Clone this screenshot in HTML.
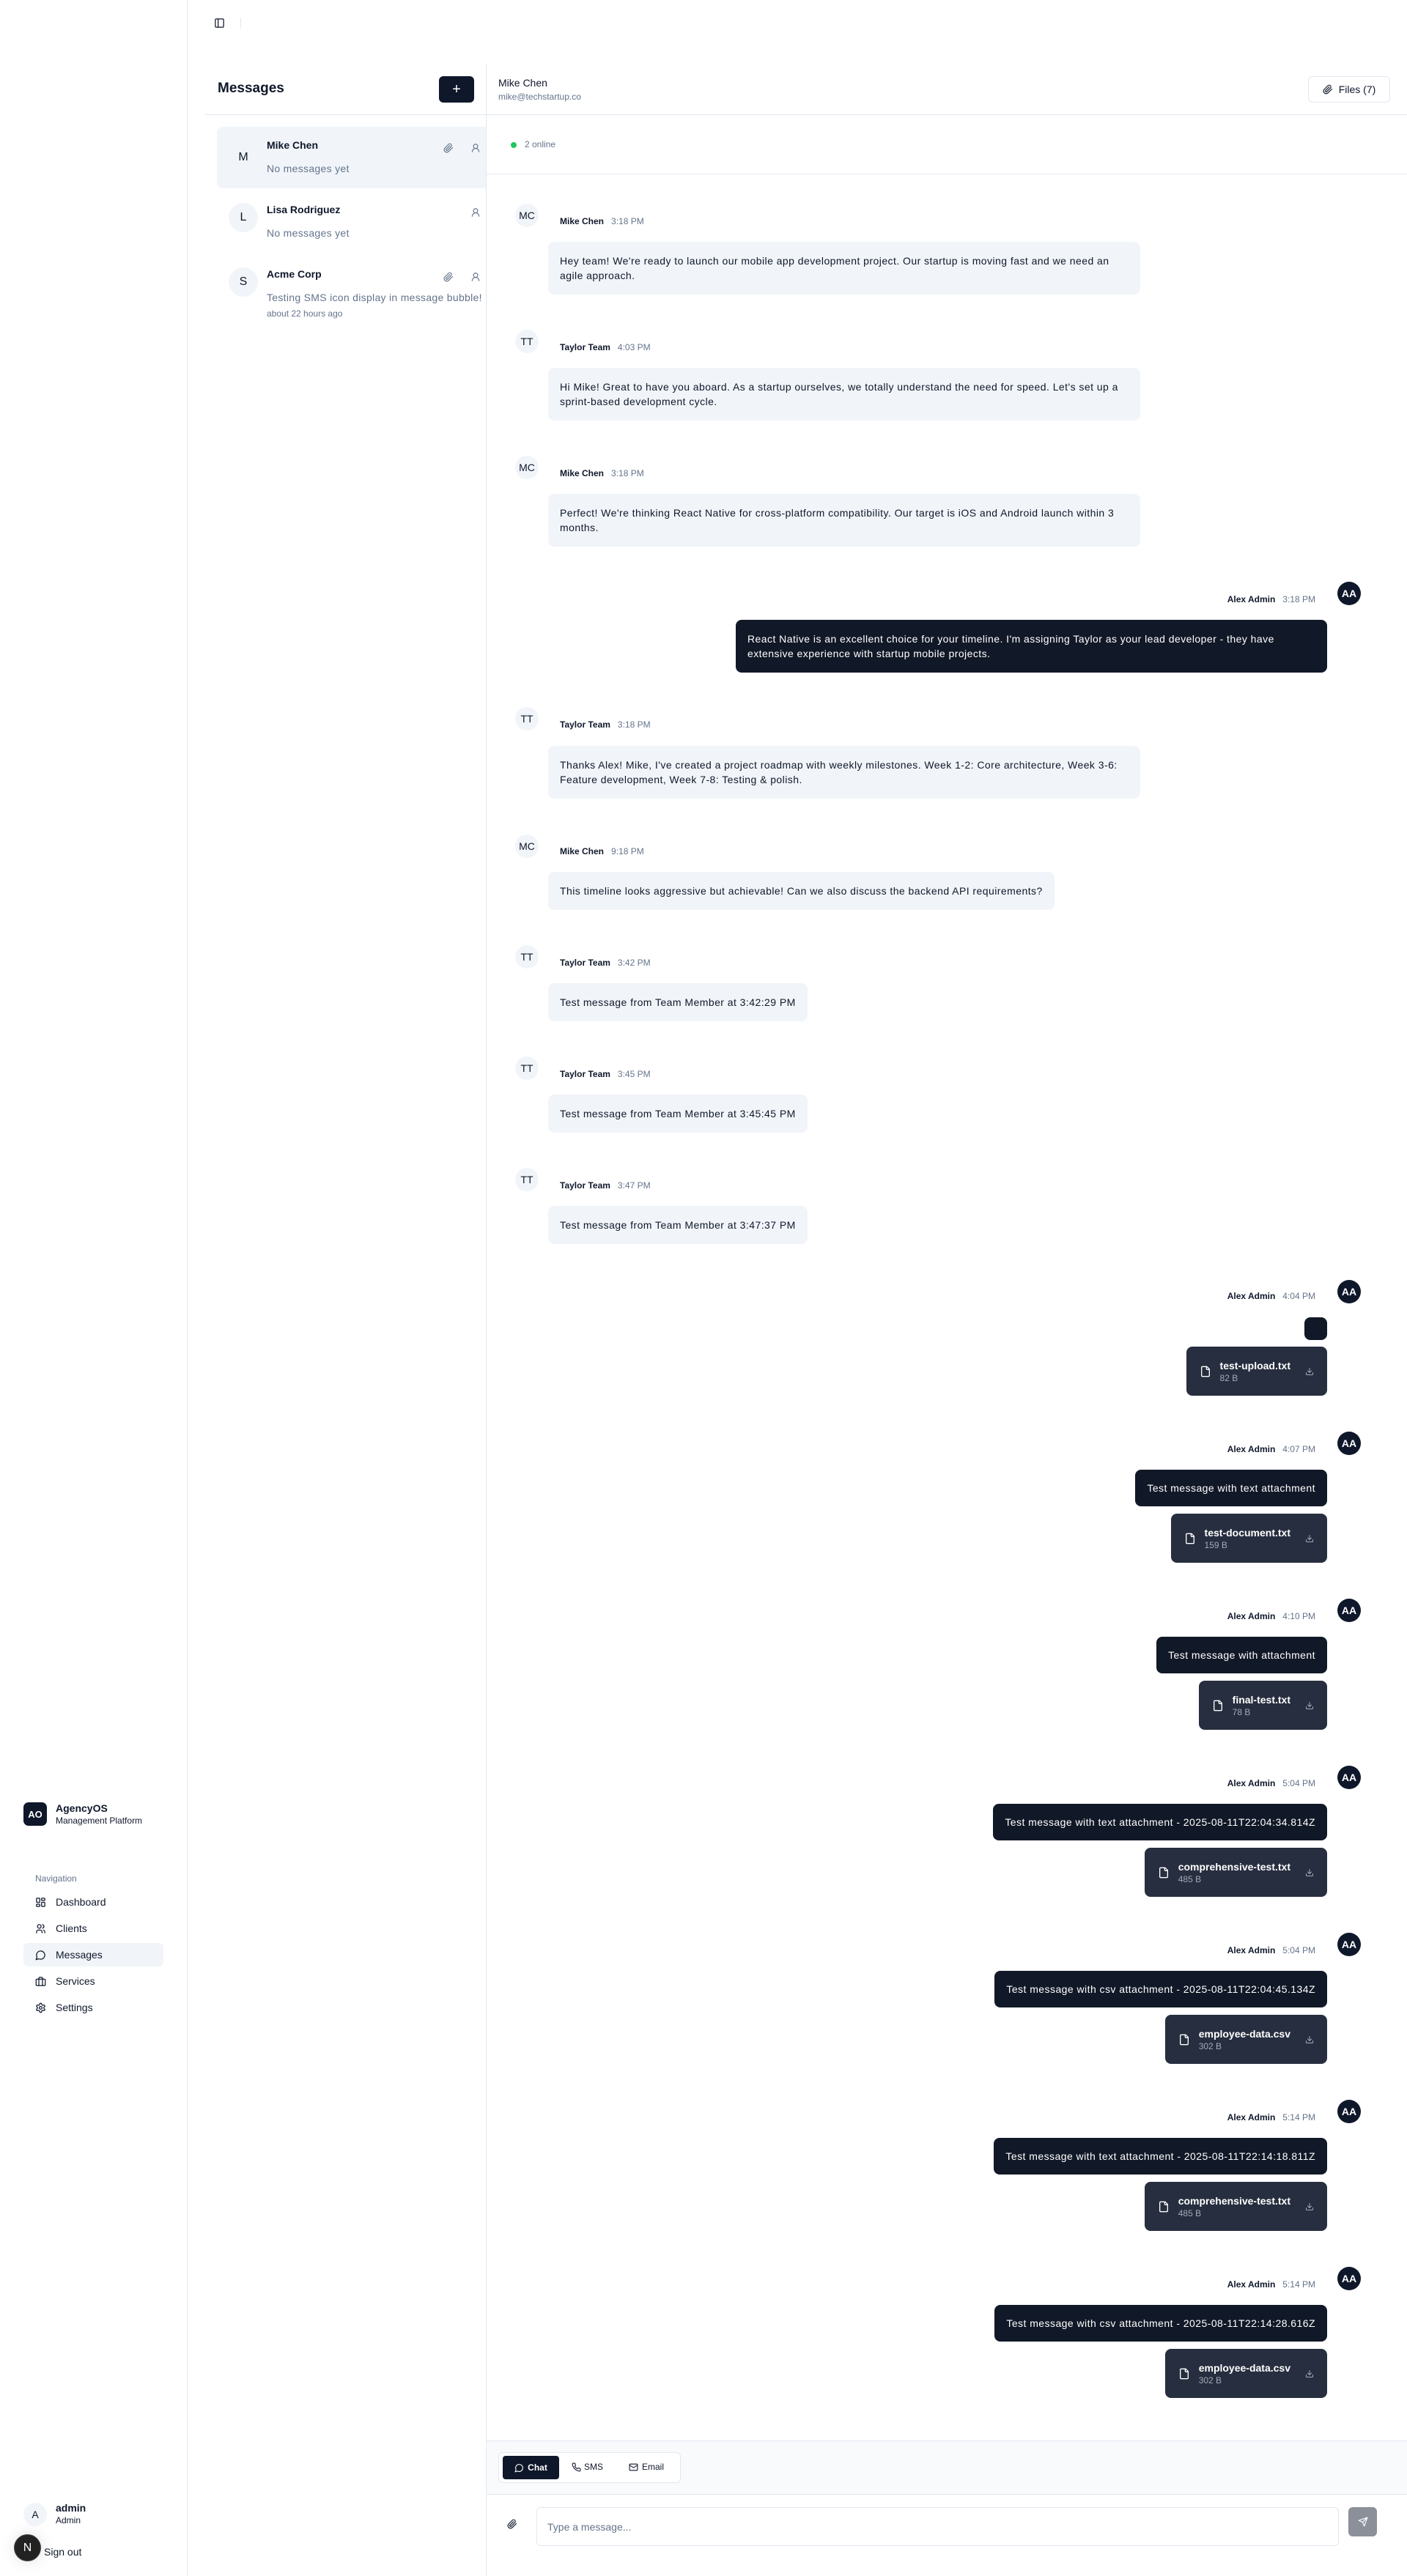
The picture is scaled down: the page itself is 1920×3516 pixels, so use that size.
<!DOCTYPE html>
<html><head><meta charset="utf-8">
<style>
*{box-sizing:border-box;margin:0;padding:0}
body{width:1920px;height:3516px;position:relative;background:#fff;font-family:"Liberation Sans",sans-serif;color:#0f172a;overflow:hidden}
.a{position:absolute}
.sb{left:0;top:0;width:256px;height:3516px;border-right:1px solid #e2e8f0;background:#fff}
.nav{position:absolute;left:32px;width:191px;height:32px;border-radius:6px;display:flex;align-items:center;padding-left:16px;font-size:14px;color:#0f172a}
.nav svg{width:15px;height:15px;margin-right:13px;fill:none;stroke:#0f172a;stroke-width:2;stroke-linecap:round;stroke-linejoin:round}
.av{position:absolute;width:32px;height:32px;border-radius:50%;background:#f1f5f9;display:flex;align-items:center;justify-content:center;font-size:14px;color:#0f172a}
.av.d{background:#0f172a;color:#fff;font-weight:600}
.nm{position:absolute;font-size:12px;font-weight:600;white-space:nowrap;line-height:16px}
.nm span{font-weight:400;color:#64748b;margin-left:10px}
.lb{position:absolute;left:748px;background:#f1f5f9;border-radius:8px;padding:16px;font-size:14px;line-height:20px;color:#0f172a;letter-spacing:.45px}
.rb{position:absolute;right:109px;background:#111827;border-radius:8px;padding:15px 16px;font-size:14px;line-height:20px;color:#fff;white-space:nowrap;letter-spacing:.45px}
.fc{position:absolute;right:109px;background:#272e3f;border-radius:8px;height:67px;display:flex;align-items:center;padding:0 18px 0 18px;color:#fff}
.fc .fi{width:16px;height:16px;margin-right:12px}
.fc .t{font-size:14px;font-weight:600;line-height:18px}
.fc .s{font-size:12px;color:#a3aab7;line-height:16px}
.fc .dl{width:12px;height:12px;margin-left:20px}
svg.ic{fill:none;stroke:currentColor;stroke-width:2;stroke-linecap:round;stroke-linejoin:round}
</style></head><body>

<div class="a sb"></div>
<div class="a" style="left:32px;top:2460px;width:32px;height:32px;border-radius:7px;background:#0f172a;color:#fff;font-weight:700;font-size:13px;display:flex;align-items:center;justify-content:center">AO</div>
<div class="a" style="left:76px;top:2459px;font-size:14px;font-weight:600;line-height:18px">AgencyOS</div>
<div class="a" style="left:76px;top:2477px;font-size:12px;line-height:16px">Management Platform</div>
<div class="a" style="left:48px;top:2557px;font-size:12px;color:#64748b">Navigation</div>
<div class="nav" style="top:2580px"><svg viewBox="0 0 24 24"><rect x="3" y="3" width="7" height="9" rx="1"/><rect x="14" y="3" width="7" height="5" rx="1"/><rect x="14" y="12" width="7" height="9" rx="1"/><rect x="3" y="16" width="7" height="5" rx="1"/></svg>Dashboard</div>
<div class="nav" style="top:2616px"><svg viewBox="0 0 24 24"><circle cx="9" cy="7" r="4"/><path d="M3 21v-2a4 4 0 0 1 4-4h4a4 4 0 0 1 4 4v2"/><path d="M16 3.1a4 4 0 0 1 0 7.8M21 21v-2a4 4 0 0 0-3-3.9"/></svg>Clients</div>
<div class="nav" style="top:2652px;background:#f1f5f9;font-weight:500"><svg viewBox="0 0 24 24"><path d="M7.9 20A9 9 0 1 0 4 16.1L2 22Z"/></svg>Messages</div>
<div class="nav" style="top:2688px"><svg viewBox="0 0 24 24"><rect x="2" y="7" width="20" height="14" rx="2"/><path d="M16 21V5a2 2 0 0 0-2-2h-4a2 2 0 0 0-2 2v16"/></svg>Services</div>
<div class="nav" style="top:2724px"><svg viewBox="0 0 24 24"><circle cx="12" cy="12" r="3"/><path d="M12.2 2h-.4a2 2 0 0 0-2 2v.2a2 2 0 0 1-1 1.7l-.4.3a2 2 0 0 1-2 0l-.2-.1a2 2 0 0 0-2.7.7l-.2.4a2 2 0 0 0 .7 2.7l.2.1a2 2 0 0 1 1 1.7v.5a2 2 0 0 1-1 1.7l-.2.1a2 2 0 0 0-.7 2.7l.2.4a2 2 0 0 0 2.7.7l.2-.1a2 2 0 0 1 2 0l.4.3a2 2 0 0 1 1 1.7v.2a2 2 0 0 0 2 2h.4a2 2 0 0 0 2-2v-.2a2 2 0 0 1 1-1.7l.4-.3a2 2 0 0 1 2 0l.2.1a2 2 0 0 0 2.7-.7l.2-.4a2 2 0 0 0-.7-2.7l-.2-.1a2 2 0 0 1-1-1.7v-.5a2 2 0 0 1 1-1.7l.2-.1a2 2 0 0 0 .7-2.7l-.2-.4a2 2 0 0 0-2.7-.7l-.2.1a2 2 0 0 1-2 0l-.4-.3a2 2 0 0 1-1-1.7V4a2 2 0 0 0-2-2z"/></svg>Settings</div>
<div class="av" style="left:32px;top:3416px">A</div>
<div class="a" style="left:76px;top:3415px;font-size:14px;font-weight:600;line-height:16px">admin</div>
<div class="a" style="left:76px;top:3432px;font-size:12px;line-height:16px">Admin</div>
<div class="a" style="left:19px;top:3459px;width:37px;height:37px;border-radius:50%;background:#222;border:1px solid #444;color:#fff;display:flex;align-items:center;justify-content:center;font-size:16px;box-shadow:0 0 20px rgba(0,0,0,.12)">N</div>
<div class="a" style="left:60px;top:3475px;font-size:14px">Sign out</div>

<svg class="a ic" style="left:292px;top:24px;width:15px;height:15px;color:#0f172a" viewBox="0 0 24 24"><rect x="3" y="3" width="18" height="18" rx="2"/><path d="M9 3v18"/></svg>
<div class="a" style="left:328px;top:24px;width:1px;height:15px;background:#e2e8f0"></div>

<div class="a" style="left:297px;top:110px;font-size:19px;font-weight:700">Messages</div>
<div class="a" style="left:599px;top:104px;width:48px;height:36px;border-radius:6px;background:#0f172a;color:#fff;font-size:20px;display:flex;align-items:center;justify-content:center">+</div>
<div class="a" style="left:280px;top:156px;width:1640px;height:1px;background:#e2e8f0"></div>
<div class="a" style="left:663px;top:88px;width:1px;height:3428px;background:#e2e8f0"></div>
<div class="a" style="left:296px;top:173px;width:367px;height:84px;background:#f1f5f9;border-radius:8px 0 0 8px"></div>
<div class="av" style="left:312px;top:195px;width:40px;height:40px;background:transparent;font-size:16px">M</div>
<div class="a" style="left:364px;top:190px;font-size:14px;font-weight:600">Mike Chen</div>
<div class="a" style="left:364px;top:222px;font-size:14px;color:#64748b;letter-spacing:.3px">No messages yet</div>
<div class="av" style="left:312px;top:277px;width:40px;height:40px;font-size:16px">L</div>
<div class="a" style="left:364px;top:278px;font-size:14px;font-weight:600">Lisa Rodriguez</div>
<div class="a" style="left:364px;top:310px;font-size:14px;color:#64748b;letter-spacing:.3px">No messages yet</div>
<div class="av" style="left:312px;top:365px;width:40px;height:40px;font-size:16px">S</div>
<div class="a" style="left:364px;top:366px;font-size:14px;font-weight:600">Acme Corp</div>
<div class="a" style="left:364px;top:398px;width:299px;overflow:hidden;white-space:nowrap;font-size:14px;color:#64748b;letter-spacing:.3px">Testing SMS icon display in message bubble!</div>
<div class="a" style="left:364px;top:421px;font-size:12px;color:#64748b">about 22 hours ago</div>
<svg class="a ic" style="left:605px;top:195px;width:14px;height:14px;color:#64748b" viewBox="0 0 24 24"><path d="m21.4 11.1-9.2 9.2a6 6 0 0 1-8.5-8.5l8.6-8.6a4 4 0 0 1 5.7 5.7l-8.6 8.6a2 2 0 0 1-2.8-2.8l8.5-8.5"/></svg>
<svg class="a ic" style="left:642px;top:195px;width:14px;height:14px;color:#64748b" viewBox="0 0 24 24"><circle cx="12" cy="8" r="5"/><path d="M20 21a8 8 0 0 0-16 0"/></svg>
<svg class="a ic" style="left:642px;top:283px;width:14px;height:14px;color:#64748b" viewBox="0 0 24 24"><circle cx="12" cy="8" r="5"/><path d="M20 21a8 8 0 0 0-16 0"/></svg>
<svg class="a ic" style="left:605px;top:371px;width:14px;height:14px;color:#64748b" viewBox="0 0 24 24"><path d="m21.4 11.1-9.2 9.2a6 6 0 0 1-8.5-8.5l8.6-8.6a4 4 0 0 1 5.7 5.7l-8.6 8.6a2 2 0 0 1-2.8-2.8l8.5-8.5"/></svg>
<svg class="a ic" style="left:642px;top:371px;width:14px;height:14px;color:#64748b" viewBox="0 0 24 24"><circle cx="12" cy="8" r="5"/><path d="M20 21a8 8 0 0 0-16 0"/></svg>

<div class="a" style="left:680px;top:105px;font-size:14px;font-weight:500">Mike Chen</div>
<div class="a" style="left:680px;top:125px;font-size:12px;color:#64748b">mike@techstartup.co</div>
<div class="a" style="left:1785px;top:104px;width:112px;height:36px;border:1px solid #e2e8f0;border-radius:6px;display:flex;align-items:center;justify-content:center;font-size:14px;font-weight:500"><svg class="ic" style="width:14px;height:14px;margin-right:8px" viewBox="0 0 24 24"><path d="m21.4 11.1-9.2 9.2a6 6 0 0 1-8.5-8.5l8.6-8.6a4 4 0 0 1 5.7 5.7l-8.6 8.6a2 2 0 0 1-2.8-2.8l8.5-8.5"/></svg>Files (7)</div>
<div class="a" style="left:697px;top:194px;width:8px;height:8px;border-radius:50%;background:#22c55e"></div>
<div class="a" style="left:716px;top:190px;font-size:12px;color:#64748b">2 online</div>
<div class="a" style="left:663px;top:237px;width:1257px;height:1px;background:#e2e8f0"></div>

<div class="av" style="left:703px;top:278px">MC</div><div class="nm" style="left:764px;top:294px">Mike Chen<span>3:18 PM</span></div>
<div class="lb" style="top:330px;width:808px">Hey team! We're ready to launch our mobile app development project. Our startup is moving fast and we need an agile approach.</div>
<div class="av" style="left:703px;top:450px">TT</div><div class="nm" style="left:764px;top:466px">Taylor Team<span>4:03 PM</span></div>
<div class="lb" style="top:502px;width:808px">Hi Mike! Great to have you aboard. As a startup ourselves, we totally understand the need for speed. Let's set up a sprint-based development cycle.</div>
<div class="av" style="left:703px;top:622px">MC</div><div class="nm" style="left:764px;top:638px">Mike Chen<span>3:18 PM</span></div>
<div class="lb" style="top:674px;width:808px">Perfect! We're thinking React Native for cross-platform compatibility. Our target is iOS and Android launch within 3 months.</div>

<div class="av d" style="left:1825px;top:794px">AA</div><div class="nm" style="right:125px;top:810px">Alex Admin<span>3:18 PM</span></div>
<div class="rb" style="top:846px;width:807px;white-space:normal;padding:16px">React Native is an excellent choice for your timeline. I'm assigning Taylor as your lead developer - they have extensive experience with startup mobile projects.</div>

<div class="av" style="left:703px;top:965px">TT</div><div class="nm" style="left:764px;top:981px">Taylor Team<span>3:18 PM</span></div>
<div class="lb" style="top:1018px;width:808px">Thanks Alex! Mike, I've created a project roadmap with weekly milestones. Week 1-2: Core architecture, Week 3-6: Feature development, Week 7-8: Testing &amp; polish.</div>
<div class="av" style="left:703px;top:1139px">MC</div><div class="nm" style="left:764px;top:1154px">Mike Chen<span>9:18 PM</span></div>
<div class="lb" style="top:1190px;white-space:nowrap">This timeline looks aggressive but achievable! Can we also discuss the backend API requirements?</div>
<div class="av" style="left:703px;top:1290px">TT</div><div class="nm" style="left:764px;top:1306px">Taylor Team<span>3:42 PM</span></div>
<div class="lb" style="top:1342px;white-space:nowrap">Test message from Team Member at 3:42:29 PM</div>
<div class="av" style="left:703px;top:1442px">TT</div><div class="nm" style="left:764px;top:1458px">Taylor Team<span>3:45 PM</span></div>
<div class="lb" style="top:1494px;white-space:nowrap">Test message from Team Member at 3:45:45 PM</div>
<div class="av" style="left:703px;top:1594px">TT</div><div class="nm" style="left:764px;top:1610px">Taylor Team<span>3:47 PM</span></div>
<div class="lb" style="top:1646px;white-space:nowrap">Test message from Team Member at 3:47:37 PM</div>

<div class="av d" style="left:1825px;top:1747px">AA</div><div class="nm" style="right:125px;top:1761px">Alex Admin<span>4:04 PM</span></div>
<div class="rb" style="top:1798px;width:31px;height:31px;padding:0"></div>
<div class="fc" style="top:1838px"><svg class="fi ic" viewBox="0 0 24 24"><path d="M15 2H6a2 2 0 0 0-2 2v16a2 2 0 0 0 2 2h12a2 2 0 0 0 2-2V7Z"/><path d="M14 2v4a2 2 0 0 0 2 2h4"/></svg><div><div class="t">test-upload.txt</div><div class="s">82 B</div></div><svg class="dl ic" style="color:#a3aab7" viewBox="0 0 24 24"><path d="M21 15v4a2 2 0 0 1-2 2H5a2 2 0 0 1-2-2v-4M7 10l5 5 5-5M12 15V3"/></svg></div>

<div class="av d" style="left:1825px;top:1954px">AA</div><div class="nm" style="right:125px;top:1970px">Alex Admin<span>4:07 PM</span></div>
<div class="rb" style="top:2006px">Test message with text attachment</div>
<div class="fc" style="top:2066px"><svg class="fi ic" viewBox="0 0 24 24"><path d="M15 2H6a2 2 0 0 0-2 2v16a2 2 0 0 0 2 2h12a2 2 0 0 0 2-2V7Z"/><path d="M14 2v4a2 2 0 0 0 2 2h4"/></svg><div><div class="t">test-document.txt</div><div class="s">159 B</div></div><svg class="dl ic" style="color:#a3aab7" viewBox="0 0 24 24"><path d="M21 15v4a2 2 0 0 1-2 2H5a2 2 0 0 1-2-2v-4M7 10l5 5 5-5M12 15V3"/></svg></div>

<div class="av d" style="left:1825px;top:2182px">AA</div><div class="nm" style="right:125px;top:2198px">Alex Admin<span>4:10 PM</span></div>
<div class="rb" style="top:2234px">Test message with attachment</div>
<div class="fc" style="top:2294px"><svg class="fi ic" viewBox="0 0 24 24"><path d="M15 2H6a2 2 0 0 0-2 2v16a2 2 0 0 0 2 2h12a2 2 0 0 0 2-2V7Z"/><path d="M14 2v4a2 2 0 0 0 2 2h4"/></svg><div><div class="t">final-test.txt</div><div class="s">78 B</div></div><svg class="dl ic" style="color:#a3aab7" viewBox="0 0 24 24"><path d="M21 15v4a2 2 0 0 1-2 2H5a2 2 0 0 1-2-2v-4M7 10l5 5 5-5M12 15V3"/></svg></div>

<div class="av d" style="left:1825px;top:2410px">AA</div><div class="nm" style="right:125px;top:2426px">Alex Admin<span>5:04 PM</span></div>
<div class="rb" style="top:2462px">Test message with text attachment - 2025-08-11T22:04:34.814Z</div>
<div class="fc" style="top:2522px"><svg class="fi ic" viewBox="0 0 24 24"><path d="M15 2H6a2 2 0 0 0-2 2v16a2 2 0 0 0 2 2h12a2 2 0 0 0 2-2V7Z"/><path d="M14 2v4a2 2 0 0 0 2 2h4"/></svg><div><div class="t">comprehensive-test.txt</div><div class="s">485 B</div></div><svg class="dl ic" style="color:#a3aab7" viewBox="0 0 24 24"><path d="M21 15v4a2 2 0 0 1-2 2H5a2 2 0 0 1-2-2v-4M7 10l5 5 5-5M12 15V3"/></svg></div>

<div class="av d" style="left:1825px;top:2638px">AA</div><div class="nm" style="right:125px;top:2654px">Alex Admin<span>5:04 PM</span></div>
<div class="rb" style="top:2690px">Test message with csv attachment - 2025-08-11T22:04:45.134Z</div>
<div class="fc" style="top:2750px"><svg class="fi ic" viewBox="0 0 24 24"><path d="M15 2H6a2 2 0 0 0-2 2v16a2 2 0 0 0 2 2h12a2 2 0 0 0 2-2V7Z"/><path d="M14 2v4a2 2 0 0 0 2 2h4"/></svg><div><div class="t">employee-data.csv</div><div class="s">302 B</div></div><svg class="dl ic" style="color:#a3aab7" viewBox="0 0 24 24"><path d="M21 15v4a2 2 0 0 1-2 2H5a2 2 0 0 1-2-2v-4M7 10l5 5 5-5M12 15V3"/></svg></div>

<div class="av d" style="left:1825px;top:2866px">AA</div><div class="nm" style="right:125px;top:2882px">Alex Admin<span>5:14 PM</span></div>
<div class="rb" style="top:2918px">Test message with text attachment - 2025-08-11T22:14:18.811Z</div>
<div class="fc" style="top:2978px"><svg class="fi ic" viewBox="0 0 24 24"><path d="M15 2H6a2 2 0 0 0-2 2v16a2 2 0 0 0 2 2h12a2 2 0 0 0 2-2V7Z"/><path d="M14 2v4a2 2 0 0 0 2 2h4"/></svg><div><div class="t">comprehensive-test.txt</div><div class="s">485 B</div></div><svg class="dl ic" style="color:#a3aab7" viewBox="0 0 24 24"><path d="M21 15v4a2 2 0 0 1-2 2H5a2 2 0 0 1-2-2v-4M7 10l5 5 5-5M12 15V3"/></svg></div>

<div class="av d" style="left:1825px;top:3094px">AA</div><div class="nm" style="right:125px;top:3110px">Alex Admin<span>5:14 PM</span></div>
<div class="rb" style="top:3146px">Test message with csv attachment - 2025-08-11T22:14:28.616Z</div>
<div class="fc" style="top:3206px"><svg class="fi ic" viewBox="0 0 24 24"><path d="M15 2H6a2 2 0 0 0-2 2v16a2 2 0 0 0 2 2h12a2 2 0 0 0 2-2V7Z"/><path d="M14 2v4a2 2 0 0 0 2 2h4"/></svg><div><div class="t">employee-data.csv</div><div class="s">302 B</div></div><svg class="dl ic" style="color:#a3aab7" viewBox="0 0 24 24"><path d="M21 15v4a2 2 0 0 1-2 2H5a2 2 0 0 1-2-2v-4M7 10l5 5 5-5M12 15V3"/></svg></div>

<div class="a" style="left:664px;top:3331px;width:1256px;height:74px;background:#f8fafc;border-top:1px solid #e2e8f0;border-bottom:1px solid #e2e8f0"></div>
<div class="a" style="left:680px;top:3347px;width:249px;height:42px;background:#fff;border:1px solid #e2e8f0;border-radius:6px"></div>
<div class="a" style="left:686px;top:3352px;width:77px;height:32px;background:#0f172a;border-radius:4px;color:#fff;font-size:12px;font-weight:600;display:flex;align-items:center;justify-content:center"><svg class="ic" style="width:13px;height:13px;margin-right:5px" viewBox="0 0 24 24"><path d="M7.9 20A9 9 0 1 0 4 16.1L2 22Z"/></svg>Chat</div>
<div class="a" style="left:780px;top:3360px;font-size:12px;display:flex;align-items:center"><svg class="ic" style="width:13px;height:13px;margin-right:4px" viewBox="0 0 24 24"><path d="M22 16.9v3a2 2 0 0 1-2.2 2 19.8 19.8 0 0 1-8.6-3.1 19.5 19.5 0 0 1-6-6A19.8 19.8 0 0 1 2.1 4.2 2 2 0 0 1 4.1 2h3a2 2 0 0 1 2 1.7c.1.9.4 1.9.7 2.8a2 2 0 0 1-.5 2.1L8 9.9a16 16 0 0 0 6 6l1.3-1.3a2 2 0 0 1 2.1-.4c.9.3 1.8.6 2.8.7a2 2 0 0 1 1.7 2z"/></svg>SMS</div>
<div class="a" style="left:858px;top:3360px;font-size:12px;display:flex;align-items:center"><svg class="ic" style="width:13px;height:13px;margin-right:5px" viewBox="0 0 24 24"><rect x="2" y="4" width="20" height="16" rx="2"/><path d="m22 7-10 6L2 7"/></svg>Email</div>
<svg class="a ic" style="left:692px;top:3438px;width:14px;height:14px;color:#0f172a" viewBox="0 0 24 24"><path d="m21.4 11.1-9.2 9.2a6 6 0 0 1-8.5-8.5l8.6-8.6a4 4 0 0 1 5.7 5.7l-8.6 8.6a2 2 0 0 1-2.8-2.8l8.5-8.5"/></svg>
<div class="a" style="left:732px;top:3422px;width:1095px;height:53px;border:1px solid #e2e8f0;border-radius:6px;padding:0 14px;display:flex;align-items:center;font-size:14px;color:#64748b">Type a message...</div>
<div class="a" style="left:1840px;top:3422px;width:39px;height:40px;border-radius:6px;background:#8c9099;display:flex;align-items:center;justify-content:center"><svg class="ic" style="width:14px;height:14px;color:#fff" viewBox="0 0 24 24"><path d="M22 2 11 13M22 2l-7 20-4-9-9-4Z"/></svg></div>
</body></html>
